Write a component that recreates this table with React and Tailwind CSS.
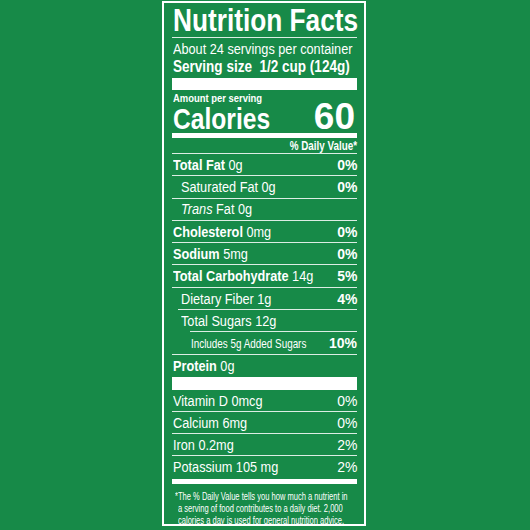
const rows = [
  { label: "Total Fat", amt: "0g", dv: "0%", bold: true },
  { label: "Saturated Fat", amt: "0g", dv: "0%", indent: 1 },
  { label: "Trans", italic: true, amt: "Fat 0g", indent: 1 },
  { label: "Cholesterol", amt: "0mg", dv: "0%", bold: true },
  { label: "Sodium", amt: "5mg", dv: "0%", bold: true },
  { label: "Total Carbohydrate", amt: "14g", dv: "5%", bold: true },
  { label: "Dietary Fiber", amt: "1g", dv: "4%", indent: 1 },
  { label: "Total Sugars", amt: "12g", indent: 1, line: 1 },
  { label: "Includes 5g Added Sugars", dv: "10%", indent: 2, small: true, line: 2 },
  { label: "Protein", amt: "0g", bold: true },
];

const vitamins = [
  { label: "Vitamin D 0mcg", dv: "0%" },
  { label: "Calcium 6mg", dv: "0%" },
  { label: "Iron 0.2mg", dv: "2%" },
  { label: "Potassium 105 mg", dv: "2%" },
];

// condensed look: Liberation Sans squeezed horizontally
function T({ children, className = "", right }) {
  return (
    <span
      className={
        "inline-block whitespace-nowrap " +
        (right ? "origin-right shrink-0 " : "origin-left min-w-0 ") +
        className
      }
    >
      {children}
    </span>
  );
}

function Line({ indent = 0 }) {
  const pad = indent === 2 ? "ml-[18px]" : indent === 1 ? "ml-[6px]" : "";
  return <div className={"h-px bg-white/85 " + pad} />;
}

function Row({ r }) {
  const pad = r.indent === 2 ? "pl-[19px]" : r.indent === 1 ? "pl-[9px]" : "pl-px";
  return (
    <div className={"h-[21.3px] flex items-center justify-between " + pad}>
      <T className={r.small ? "text-[13px] scale-x-[0.76]" : "text-[15.5px] scale-x-[0.82]"}>
        {r.italic ? (
          <>
            <span className="italic">{r.label}</span> {r.amt}
          </>
        ) : (
          <>
            <span className={r.bold ? "font-bold" : ""}>{r.label}</span>
            {r.amt && " " + r.amt}
          </>
        )}
      </T>
      {r.dv && (
        <T right className="text-[15.5px] font-bold scale-x-[0.9]">
          {r.dv}
        </T>
      )}
    </div>
  );
}

export default function App() {
  return (
    <div className="w-[530px] h-[530px] bg-[#178a48] text-white font-['Liberation_Sans',Arial,sans-serif] pt-px pl-[162px] leading-none">
      <div className="w-[204px] h-[525px] border-2 border-white pl-[8px] pr-[7px]">
        <div className="h-[34px] flex items-end pl-px pb-[1px]">
          <T className="text-[32px] font-bold scale-x-[0.82]">Nutrition Facts</T>
        </div>
        <div className="h-px bg-white/85" />
        <div className="h-[18px] flex items-end pl-px">
          <T className="text-[15.5px] scale-x-[0.82]">About 24 servings per container</T>
        </div>
        <div className="h-[18px] flex items-end pl-px">
          <T className="text-[16.5px] font-bold scale-x-[0.82]">Serving size&nbsp;&nbsp;1/2 cup (124g)</T>
        </div>
        <div className="h-[12px] mt-[4px] bg-white" />
        <div className="h-[14px] flex items-end pl-px">
          <T className="text-[11.5px] font-bold scale-x-[0.82]">Amount per serving</T>
        </div>
        <div className="h-[27px] flex items-end justify-between pl-px font-bold">
          <T className="text-[30px] leading-[24px] scale-x-[0.82]">Calories</T>
          <T right className="text-[37px] pr-[2px] leading-[28px]">60</T>
        </div>
        <div className="h-[5px] mt-[2px] bg-white" />
        <div className="h-[14px] flex items-end justify-end">
          <T right className="text-[12px] font-bold scale-x-[0.82]">% Daily Value*</T>
        </div>
        <div className="h-[1px] mt-[1px] bg-white/85" />
        {rows.map((r, i) => (
          <div key={i}>
            <Row r={r} />
            {i < rows.length - 1 && <Line indent={rows[i + 1].line || 0} />}
          </div>
        ))}
        <div className="h-[13px] bg-white mt-px" />
        {vitamins.map((v, i) => (
          <div key={i}>
            <div className="h-[21px] flex items-center justify-between pl-px text-[15.5px]">
              <T className="scale-x-[0.82]">{v.label}</T>
              <T right className="scale-x-[0.9]">{v.dv}</T>
            </div>
            {i < vitamins.length - 1 && <Line />}
          </div>
        ))}
        <div className="h-[5px] mt-[2px] bg-white" />
        <div className="pt-[6px] pl-[3px] text-[10.5px] leading-[12px]">
          <div><T className="scale-x-[0.72]">*The % Daily Value tells you how much a nutrient in</T></div>
          <div className="pl-[3px]"><T className="scale-x-[0.72]">a serving of food contributes to a daily diet. 2,000</T></div>
          <div className="pl-[3px]"><T className="scale-x-[0.72]">calories a day is used for general nutrition advice.</T></div>
        </div>
      </div>
    </div>
  );
}
